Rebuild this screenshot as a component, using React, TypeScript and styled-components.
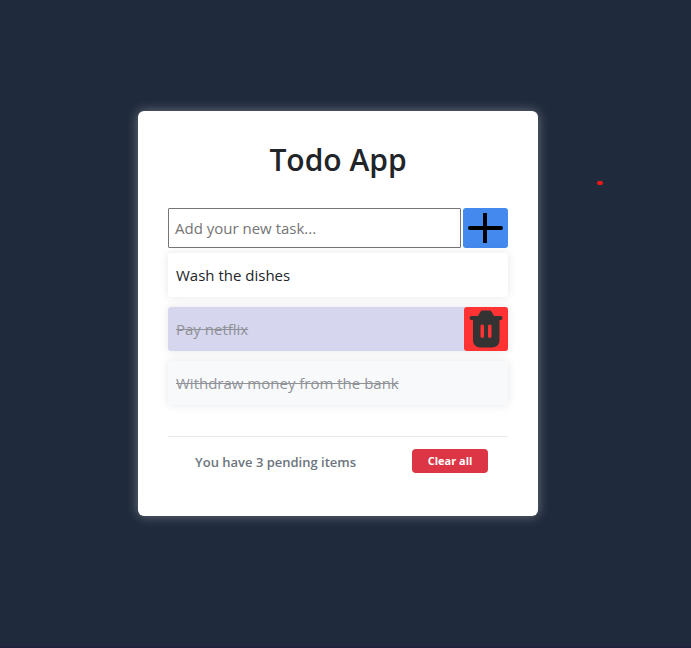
import React, { useState } from "react";
import styled, { createGlobalStyle } from "styled-components";

const GlobalStyle = createGlobalStyle`
  *, *::before, *::after { box-sizing: border-box; }
  body {
    margin: 0;
    background: #1f2a3c;
    color: #212529;
    font-family: "Open Sans", "Noto Sans", sans-serif;
    font-size: 15px;
    line-height: 24px;
  }
`;

const Page = styled.main`
  position: relative;
  min-height: 100vh;
  display: flex;
  align-items: center;
  justify-content: center;
  padding: 0 15px 19px 0;
  border-bottom: 2px solid #1f233c;
`;

const Marker = styled.span`
  position: absolute;
  top: 181px;
  left: 597px;
  width: 6px;
  height: 4px;
  border-radius: 2px;
  background: #ea1a1c;
`;

const Card = styled.section`
  width: 100%;
  max-width: 400px;
  padding: 30px 30px 43px;
  border-radius: 6px;
  background: #fff;
  box-shadow: 0 0 12px rgba(255, 255, 255, 0.35);
`;

const Title = styled.h1`
  margin: 0 0 29px;
  font-size: 30px;
  line-height: 38px;
  font-weight: 600;
  text-align: center;
`;

const AddForm = styled.form`
  display: flex;
  gap: 2px;
  margin-bottom: 5px;
`;

const TaskInput = styled.input`
  flex: 1;
  min-width: 0;
  height: 40px;
  padding: 0 6px;
  border: 1px solid #767676;
  border-radius: 1px;
  font: inherit;
  color: inherit;
  &::placeholder { color: #757575; opacity: 1; }
`;

const IconButton = styled.button<{ $tone: "add" | "remove" }>`
  display: flex;
  flex: none;
  align-items: center;
  justify-content: center;
  width: ${(p) => (p.$tone === "add" ? 45 : 44)}px;
  padding: 0;
  border: 0;
  border-radius: 3px;
  background: ${(p) => (p.$tone === "add" ? "#4489ee" : "#ff3333")};
  cursor: pointer;
`;

const TaskList = styled.ul`
  display: grid;
  gap: 10px;
  margin: 0 0 31px;
  padding: 0;
  list-style: none;
`;

const rowColours = { open: "#ffffff", active: "#d6d6ee", done: "#f8f9fb" };

const TaskRow = styled.li<{ $state: keyof typeof rowColours }>`
  display: flex;
  justify-content: space-between;
  height: 44px;
  border-radius: 3px;
  background: ${(p) => rowColours[p.$state]};
  box-shadow: 0 0 10px rgba(0, 0, 0, 0.1);
`;

const TaskText = styled.span<{ $done: boolean }>`
  padding: 10px 8px;
  color: ${(p) => (p.$done ? "#8f9297" : "#212529")};
  text-decoration: ${(p) => (p.$done ? "line-through" : "none")};
`;

const Footer = styled.footer`
  display: flex;
  align-items: center;
  justify-content: space-between;
  padding: 12px 20px 0 27px;
  border-top: 1px solid #e6e8ed;
`;

const Pending = styled.span`
  font-size: 13px;
  line-height: 22px;
  padding-top: 2px;
  font-weight: 600;
  color: #6c757d;
`;

const ClearButton = styled.button`
  width: 76px;
  height: 24px;
  padding: 0;
  border: 0;
  border-radius: 4px;
  background: #dc3545;
  color: #fff;
  font: inherit;
  font-size: 11px;
  font-weight: 700;
  cursor: pointer;
`;

const PlusIcon = () => (
  <svg width="45" height="40" viewBox="0 0 45 40" aria-hidden="true">
    <path d="M20 5h4v30h-4z" />
    <rect x="5" y="18" width="35" height="4" rx="2" />
  </svg>
);

const TrashIcon = () => (
  <svg width="44" height="44" viewBox="0 0 44 44" fill="#333" aria-hidden="true">
    <path d="M7.5 9H14l2-3.500C16.700 4 17.500 3.500 19 3.500h6c1.500 0 2.300.5 3 2L30 9h6.500a2 2 0 0 1 0 4H35.500V33c0 4.500-3 7.500-7.500 7.500H16.500C12 40.500 9 37.500 9 33V13H7.500a2 2 0 0 1 0-4z" />
    <rect x="16.500" y="17.500" width="3.500" height="13.500" rx="1.700" fill="#ff3333" />
    <rect x="24" y="17.500" width="3.500" height="13.500" rx="1.700" fill="#ff3333" />
  </svg>
);

const tasks: { text: string; state: keyof typeof rowColours }[] = [
  { text: "Wash the dishes", state: "open" },
  { text: "Pay netflix", state: "active" },
  { text: "Withdraw money from the bank", state: "done" },
];

export default function App() {
  const [draft, setDraft] = useState("");
  return (
    <>
      <GlobalStyle />
      <Page>
        <Card>
          <Title>Todo App</Title>
          <AddForm onSubmit={(e) => e.preventDefault()}>
            <TaskInput
              type="text"
              aria-label="New task"
              placeholder="Add your new task..."
              value={draft}
              onChange={(e) => setDraft(e.target.value)}
            />
            <IconButton $tone="add" type="submit" aria-label="Add task">
              <PlusIcon />
            </IconButton>
          </AddForm>
          <TaskList>
            {tasks.map((task) => (
              <TaskRow key={task.text} $state={task.state}>
                <TaskText $done={task.state !== "open"}>{task.text}</TaskText>
                {task.state === "active" && (
                  <IconButton $tone="remove" type="button" aria-label={`Delete ${task.text}`}>
                    <TrashIcon />
                  </IconButton>
                )}
              </TaskRow>
            ))}
          </TaskList>
          <Footer>
            <Pending>You have {tasks.length} pending items</Pending>
            <ClearButton type="button">Clear all</ClearButton>
          </Footer>
        </Card>
        <Marker aria-hidden="true" />
      </Page>
    </>
  );
}
